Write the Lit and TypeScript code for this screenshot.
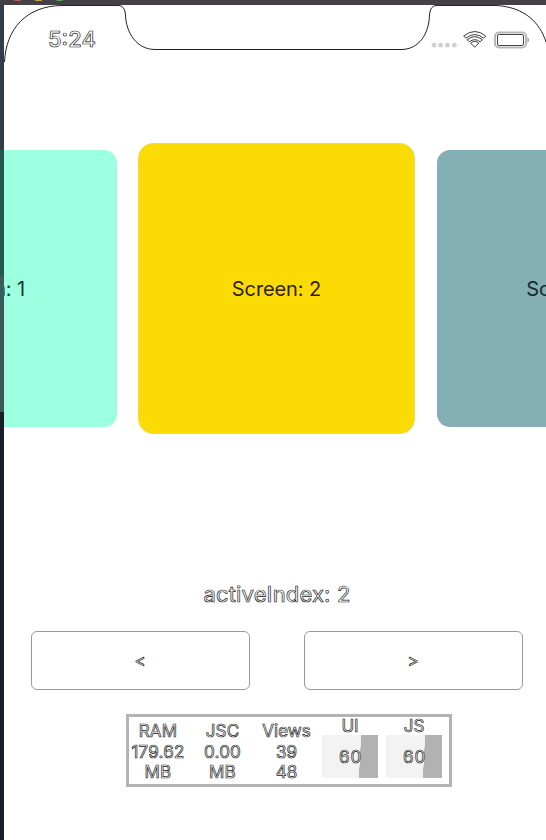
import { LitElement, html, css, svg } from "lit";
import { customElement, property } from "lit/decorators.js";

@customElement("status-bar")
class StatusBar extends LitElement {
  static styles = css`
    :host { display: block; height: 57px; position: relative; }
    .frame { position: absolute; left: -4px; top: -5px; }
    .row { display: flex; align-items: center; height: 100%; padding: 12px 17px 0 44px; box-sizing: border-box; position: relative; }
    .time { font-size: 22px; font-weight: 500; letter-spacing: 0; line-height: 26px; margin-top: -1px;
      color: #fff; -webkit-text-stroke: 0.7px #222; flex: 1; }
    .icons { display: block; }
  `;
  render() {
    return html`
      <svg class="frame" width="546" height="100" fill="none">
        <path d="M4.500 62C6 29 26 6 62 5.500H119Q125 6 125.500 15C126 33 137 49.500 155 49.500H402C419 49 429 34 429.500 15Q430 6 436 5.500H496C525 7 540 23 546 42" stroke="#222" stroke-width="1" />
      </svg>
      <div class="row">
        <div class="time">5:24</div>
        <svg class="icons" width="98" height="20" fill="none">
          ${[3, 9.700, 16.500, 23.300].map((x) => svg`<circle cx=${x} cy="15.200" r="2.400" fill="#d0d0d0"/>`)}
          <g stroke="#222" stroke-width=".9">
            <path d="M32.700 6Q44 -3 54.700 6L52.600 8.200Q43.700 1 34.900 8.200Z" />
            <path d="M36.200 9.700Q43.700 3.700 51.300 9.700L49.200 11.800Q43.700 7.600 38.300 11.800Z" />
            <path d="M39.700 13.200Q43.700 9.600 47.800 13.200L43.700 17.200Z" />
          </g>
          <rect x="64" y="2.500" width="31" height="15" rx="4" stroke="#b8b8b8" stroke-width="2" />
          <rect x="66.500" y="4.500" width="26" height="11" rx="1.500" stroke="#444" />
          <path d="M96.500 7Q99.500 10 96.500 13Z" fill="#999" />
        </svg>
      </div>
    `;
  }
}

@customElement("slide-card")
class SlideCard extends LitElement {
  @property({ type: Number }) index = 0;
  static styles = css`
    :host { display: flex; align-items: center; justify-content: center; box-sizing: border-box;
      font-size: 20px; line-height: 24px; white-space: nowrap; letter-spacing: -0.1px; padding-top: 1px; }
  `;
  render() {
    return html`<span>Screen: ${this.index}</span>`;
  }
}

@customElement("perf-monitor")
class PerfMonitor extends LitElement {
  static styles = css`
    :host { display: flex; box-sizing: border-box; width: 326px; height: 73px; border: 3px solid #b3b3b3;
      font-size: 17px; line-height: 20.700px; text-align: center; }
    .stat { padding-top: 4px; white-space: pre; color: #fff; -webkit-text-stroke: 0.7px #222; }
    .ram { width: 58px; letter-spacing: 0.2px; }
    .jsc { width: 71px; letter-spacing: 0.2px; }
    .views { width: 57px; }
    .fps { width: 56px; margin-left: 8px; }
    .fps.first { margin-left: 7px; }
    .name { height: 18px; line-height: 18px; color: #fff; -webkit-text-stroke: 0.7px #222; }
    .graph { height: 43px; line-height: 44px; color: #fff; -webkit-text-stroke: 0.7px #222; letter-spacing: 0.8px; padding-left: 1px;
      box-sizing: border-box; background: linear-gradient(93deg, #f3f3f3 67%, #b2b2b2 67.500%); }
  `;
  render() {
    return html`
      <div class="stat ram">RAM\n179.62\nMB</div>
      <div class="stat jsc">JSC\n0.00\nMB</div>
      <div class="stat views">Views\n39\n48</div>
      ${["UI", "JS"].map((n) => html`
        <div class="fps ${n === "UI" ? "first" : ""}"><div class="name">${n}</div><div class="graph">60</div></div>`)}
    `;
  }
}

@customElement("app-root")
class AppRoot extends LitElement {
  static styles = css`
    :host { display: block; width: 546px; height: 840px; overflow: hidden; background: #fff;
      font-family: Inter, "Liberation Sans", sans-serif; }
    .titlebar { height: 5px; background: #434145; display: flex; gap: 14px; padding-left: 14px; box-sizing: border-box; overflow: hidden; }
    .light { width: 7px; height: 1px; border-radius: 0 0 3px 3px; }
    .red { background: #b95c53; }
    .yellow { background: #c8a544; }
    .green { background: #58a052; }
    .body { display: flex; height: 835px; }
    .desktop { width: 4px; flex: none; background: linear-gradient(#303e4b 0 145px, #24584f 145px 270px, #3c5a59 270px 407px, #181e29 407px); }
    .phone { width: 542px; overflow: hidden; display: flex; flex-direction: column; align-items: center; }
    status-bar { width: 542px; flex: none; }
    .carousel { display: flex; align-items: center; gap: 22px; margin-top: 80.500px; margin-left: 3px; height: 292px; flex: none; }
    slide-card { width: 268px; height: 277px; border-radius: 13px; }
    .prev { width: 269px; margin-right: -1px; background: #9cffdf; color: #0d3b2c; }
    .next { width: 268px; background: #84afb5; color: #142c30; }
    .active { width: 277px; height: 291px; border-radius: 15px; background: #fadc04; color: #33220c; border: 1px solid #eedb50; }
    .label { margin-top: 146.500px; margin-left: 4px; height: 26px; line-height: 26px; font-size: 22px; letter-spacing: 0.15px; color: #fff;
      -webkit-text-stroke: 0.7px #222; white-space: nowrap; }
    .buttons { display: flex; gap: 54px; margin-top: 24px; margin-left: 3px; }
    .btn { width: 219px; height: 59px; box-sizing: border-box; border: 1px solid #999; border-radius: 6px; background: #fff;
      font: 17px Inter, sans-serif; color: #fff; -webkit-text-stroke: 0.7px #222; padding: 0; }
    perf-monitor { margin-top: 24px; margin-left: 28px; }
  `;
  render() {
    return html`
      <div class="titlebar"><i class="light red"></i><i class="light yellow"></i><i class="light green"></i></div>
      <div class="body">
        <div class="desktop"></div>
        <div class="phone">
          <status-bar></status-bar>
          <div class="carousel">
            <slide-card class="prev" .index=${1}></slide-card>
            <slide-card class="active" .index=${2}></slide-card>
            <slide-card class="next" .index=${3}></slide-card>
          </div>
          <div class="label">activeIndex: 2</div>
          <div class="buttons">
            <button class="btn">&lt;</button>
            <button class="btn">&gt;</button>
          </div>
          <perf-monitor></perf-monitor>
        </div>
      </div>
    `;
  }
}
